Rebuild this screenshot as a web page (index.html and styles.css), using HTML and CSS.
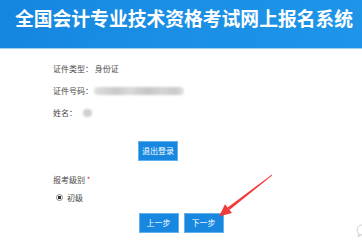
FILE: index.html
```html
<!DOCTYPE html>
<html lang="zh-CN">
<head>
    <meta charset="UTF-8">
    <meta name="viewport" content="width=device-width, initial-scale=1.0">
    <title>全国会计专业技术资格考试网上报名系统</title>
    <link rel="stylesheet" href="styles.css">
</head>
<body>
    <div class="topbar">全国会计专业技术资格考试网上报名系统</div>

    <div class="form">
        <div class="row">证件类型：&nbsp;身份证</div>
        <div class="row">证件号码：<span class="blur blur-id"></span></div>
        <div class="row">姓名：<span class="blur blur-name"></span></div>

        <div class="logout">
            <button class="btn">退出登录</button>
        </div>

        <div class="level">报考级别 <span class="req">*</span></div>
        <div class="radio-row">
            <span class="radio"></span>初级
        </div>
    </div>

    <div class="actions">
        <button class="btn">上一步</button>
        <button class="btn">下一步</button>
    </div>

    <!-- red arrow drawn over the page -->
    <svg class="arrow" width="362" height="252" viewBox="0 0 362 252">
        <polygon points="272.4,175.3 271.6,174.7 227.6,207.5 229.4,209.9" fill="#ef3b3b"/>
        <polygon points="219,216.5 225,204.2 232,213" fill="#ef3b3b"/>
    </svg>

    <svg class="chat" width="10" height="14" viewBox="0 0 10 14">
        <circle cx="8" cy="6" r="5" fill="none" stroke="#cfcfcf" stroke-width="1"/>
        <path d="M5 10 L4 13 L7 10.8" fill="none" stroke="#cfcfcf" stroke-width="1"/>
    </svg>
</body>
</html>
```

FILE: styles.css
```css
body {
    margin: 0;
    width: 362px;
    height: 252px;
    overflow: hidden;
    background: #fff;
    font-family: "Noto Sans CJK SC", "Noto Sans", sans-serif;
    color: #4a4a4a;
}
.topbar {
    height: 40px;
    padding: 8px 0 0 15px;
    background: linear-gradient(100deg, #1585df 0%, #1a8fe5 45%, #1e95e8 100%);
    border-bottom: 1px solid #9fd0f3;
    color: #fff;
    font-size: 18.8px;
    font-weight: bold;
    line-height: 20px;
    white-space: nowrap;
}
.form {
    padding: 9px 0 0 53px;
    font-size: 8px;
}
.row {
    height: 22px;
    line-height: 22px;
    display: flex;
    align-items: center;
}
.blur {
    display: inline-block;
    height: 8px;
    border-radius: 4px;
    background: #cfcfcf;
    filter: blur(1px);
}
.blur-id {
    width: 90px;
    margin-left: 1px;
    background: linear-gradient(90deg, #dedede 0%, #c9c9c9 25%, #d9d9d9 40%, #c6c6c6 60%, #d4d4d4 75%, #c9c9c9 90%, #e2e2e2 100%);
}
.blur-name {
    width: 9px;
    margin-left: 6px;
}
.logout {
    margin-top: 17px;
    padding-left: 85px;
    height: 20px;
}
.btn {
    width: 40px;
    height: 20px;
    padding: 0;
    border: 1px solid #5fb3ee;
    background: #1787e0;
    color: #fff;
    font-family: "Noto Sans CJK SC", sans-serif;
    font-size: 8px;
    line-height: 18px;
}
.level {
    margin-top: 10px;
    height: 18px;
    line-height: 18px;
}
.req {
    color: #e8323c;
}
.radio-row {
    height: 16px;
    display: flex;
    align-items: center;
    gap: 4px;
    padding-left: 3px;
}
.radio {
    width: 5px;
    height: 5px;
    border: 1px solid #888;
    border-radius: 50%;
    background: radial-gradient(circle, #333 0 1.5px, #fff 2px);
}
.actions {
    margin-top: 8px;
    display: flex;
    justify-content: center;
    gap: 5px;
}
.arrow {
    position: absolute;
    left: 0;
    top: 0;
}
.chat {
    position: absolute;
    left: 354px;
    top: 224px;
}
```
